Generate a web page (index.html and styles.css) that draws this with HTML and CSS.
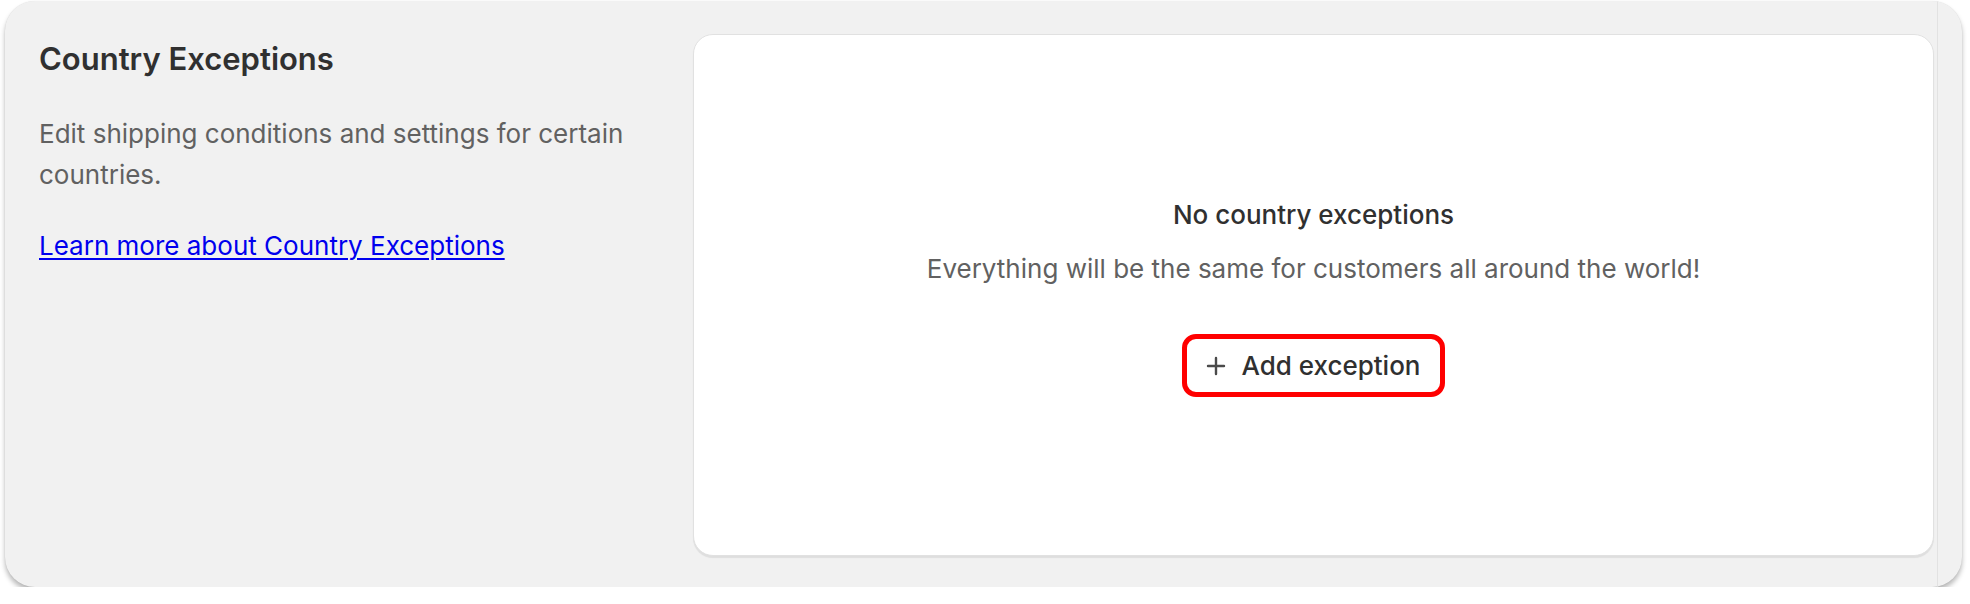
FILE: index.html
```html
<!DOCTYPE html>
<html lang="en">
<head>
<meta charset="utf-8">
<title>Country Exceptions</title>
<link rel="stylesheet" href="styles.css">
</head>
<body>
<div class="panel">
  <div class="section">
    <div class="intro">
      <h2 class="intro-title">Country Exceptions</h2>
      <p class="intro-text">Edit shipping conditions and settings for certain countries.</p>
      <a class="intro-link" href="#">Learn more about Country Exceptions</a>
    </div>
    <div class="card">
      <div class="empty">
        <h3 class="empty-title">No country exceptions</h3>
        <p class="empty-text">Everything will be the same for customers all around the world!</p>
        <button class="add-btn" type="button">
          <svg class="add-icon" viewBox="0 0 20 20" width="20" height="20" aria-hidden="true">
            <path d="M10 2v16M2 10h16" stroke="#4a4a4a" stroke-width="2.4" fill="none" stroke-linecap="round"/>
          </svg>
          <span>Add exception</span>
        </button>
      </div>
    </div>
  </div>
  <div class="edge"></div>
</div>
</body>
</html>
```

FILE: styles.css
```css
* { box-sizing: border-box; }
html, body { margin: 0; padding: 0; background: #ffffff; }
body { font-family: Inter, "Noto Sans", "Liberation Sans", sans-serif; }

.panel {
  display: flex;
  margin: 1px 0 0 5px;
  width: 1957px;
  height: 586px;
  background: #f1f1f1;
  border-radius: 30px;
  box-shadow: 0 4px 5px rgba(0, 0, 0, 0.28), 0 0 1px rgba(0, 0, 0, 0.12);
  overflow: hidden;
}

.section {
  flex: 1;
  display: grid;
  grid-template-columns: 654px 1fr;
  padding: 33px 3px 31px 34px;
}

.edge {
  width: 1px;
  background: #e2e2e2;
  margin-right: 24px;
}

.intro { padding-top: 5px; }

.intro-title {
  margin: 0;
  font-size: 31px;
  line-height: 40px;
  font-weight: 600;
  color: #303030;
  letter-spacing: 0;
}

.intro-text {
  margin: 34px 0 0;
  font-size: 26px;
  line-height: 41px;
  color: #616161;
  max-width: 610px;
}

.intro-link {
  display: inline-block;
  margin-top: 35px;
  font-size: 26px;
  line-height: 32px;
  color: #0000ee;
  text-decoration: underline;
  text-underline-offset: 3px;
  text-decoration-thickness: 2px;
}

.card {
  background: #ffffff;
  border-radius: 20px;
  border: 1px solid #e1e1e1;
  box-shadow: 0 2px 1px rgba(0, 0, 0, 0.08);
  display: flex;
  align-items: center;
  justify-content: center;
}

.empty {
  display: flex;
  flex-direction: column;
  align-items: center;
  margin-top: 6px;
}

.empty-title {
  margin: 0;
  font-size: 26px;
  line-height: 32px;
  font-weight: 500;
  color: #303030;
}

.empty-text {
  margin: 22px 0 0;
  font-size: 26px;
  line-height: 32px;
  color: #616161;
}

.add-btn {
  margin-top: 49px;
  display: flex;
  align-items: center;
  gap: 15px;
  height: 63px;
  width: 263px;
  justify-content: center;
  background: #ffffff;
  border: 5px solid #ff0000;
  border-radius: 14px;
  font-family: inherit;
  font-size: 26px;
  font-weight: 500;
  color: #303030;
  cursor: pointer;
  padding: 0;
}

.add-icon { display: block; flex: none; }
```
